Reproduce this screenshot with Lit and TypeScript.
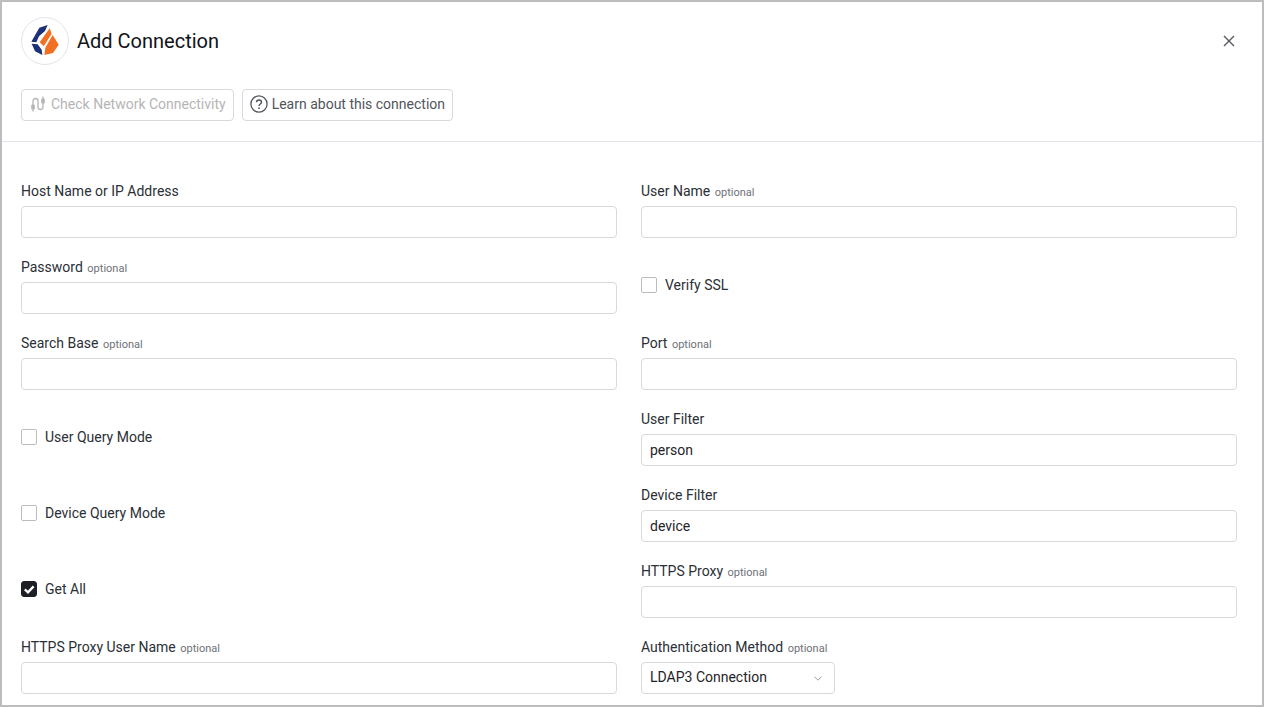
import { LitElement, html, css } from "lit";
import { customElement } from "lit/decorators.js";

type F =
  | { t: "input"; label: string; opt?: boolean; value?: string }
  | { t: "check"; label: string; checked?: boolean }
  | { t: "select"; label: string; opt?: boolean; value: string };

const fields: F[] = [
  { t: "input", label: "Host Name or IP Address" },
  { t: "input", label: "User Name", opt: true },
  { t: "input", label: "Password", opt: true },
  { t: "check", label: "Verify SSL" },
  { t: "input", label: "Search Base", opt: true },
  { t: "input", label: "Port", opt: true },
  { t: "check", label: "User Query Mode" },
  { t: "input", label: "User Filter", value: "person" },
  { t: "check", label: "Device Query Mode" },
  { t: "input", label: "Device Filter", value: "device" },
  { t: "check", label: "Get All", checked: true },
  { t: "input", label: "HTTPS Proxy", opt: true },
  { t: "input", label: "HTTPS Proxy User Name", opt: true },
  { t: "select", label: "Authentication Method", opt: true, value: "LDAP3 Connection" },
];

@customElement("app-root")
export class AppRoot extends LitElement {
  static styles = css`
    :host {
      display: block;
      width: 1264px;
      height: 707px;
      font-family: Roboto, "Liberation Sans", sans-serif;
      font-size: 14px;
      color: #2b2f36;
    }
    .frame {
      box-sizing: border-box;
      width: 1264px;
      height: 707px;
      border: 2px solid #bdbdbd;
      background: #fff;
      overflow: hidden;
    }
    .head {
      display: flex;
      align-items: center;
      padding: 15px 19px 0;
      height: 48px;
    }
    .logo {
      box-sizing: border-box;
      width: 48px;
      height: 48px;
      border: 1px solid #e3e4ec;
      border-radius: 50%;
      display: flex;
      flex: none;
    }
    .title {
      margin-left: 8px;
      font-size: 20px;
      line-height: 28px;
      color: #111318;
      flex: 1;
    }
    .close {
      display: flex;
      margin-right: 8px;
    }
    .actions {
      display: flex;
      gap: 8px;
      padding: 24px 19px 20px;
      border-bottom: 1px solid #e3e4ec;
    }
    .btn {
      box-sizing: border-box;
      height: 32px;
      display: flex;
      align-items: center;
      gap: 4px;
      padding: 0 7px 2px;
      border: 1px solid #d9d9d9;
      border-radius: 4px;
      background: #fff;
      color: #51555c;
      line-height: 18px;
      white-space: nowrap;
    }
    .btn.off {
      color: #b5b5b5;
      gap: 5px;
      padding-left: 8px;
    }
    .grid {
      display: grid;
      grid-template-columns: 596px 596px;
      column-gap: 24px;
      row-gap: 20px;
      padding: 40px 19px 0;
    }
    .label {
      height: 18px;
      line-height: 18px;
      margin-bottom: 6px;
      color: #2b2f36;
      white-space: nowrap;
    }
    .opt {
      font-size: 11px;
      color: #6d7178;
      margin-left: 1px;
    }
    .box {
      box-sizing: border-box;
      height: 32px;
      border: 1px solid #d9d9d9;
      border-radius: 4px;
      padding: 0 8px;
      display: flex;
      align-items: center;
      color: #1f2329;
      background: #fff;
    }
    .select {
      width: 194px;
      justify-content: space-between;
      padding-right: 12px;
      padding-bottom: 2px;
    }
    .select svg {
      margin-top: 2px;
    }
    .checkcell {
      display: flex;
      align-items: center;
      gap: 8px;
      height: 56px;
      padding-bottom: 2px;
      box-sizing: border-box;
      color: #2b2f36;
    }
    .cb {
      box-sizing: border-box;
      width: 16px;
      height: 16px;
      border: 1px solid #bcbcbc;
      border-radius: 2px;
      display: flex;
      align-items: center;
      justify-content: center;
      flex: none;
    }
    .cb.on {
      background: #1d1f24;
      border-color: #1d1f24;
      border-radius: 3px;
    }
  `;

  private field(f: F) {
    if (f.t === "check") {
      return html`<div class="checkcell">
        <span class="cb ${f.checked ? "on" : ""}">
          ${f.checked
            ? html`<svg width="12" height="12" viewBox="0 0 12 12"><path d="M1.8 6.4 5 9.4 10.6 3.4" fill="none" stroke="#fff" stroke-width="2.3"/></svg>`
            : ""}
        </span>
        <span>${f.label}</span>
      </div>`;
    }
    const label = html`<div class="label">${f.label}${f.opt ? html` <span class="opt">optional</span>` : ""}</div>`;
    if (f.t === "select") {
      return html`<div>
        ${label}
        <div class="box select">
          <span>${f.value}</span>
          <svg width="8" height="5" viewBox="0 0 8 5"><path d="M0.5 0.7 4 4.2 7.5 0.7" fill="none" stroke="#9a9da2" stroke-width="1"/></svg>
        </div>
      </div>`;
    }
    return html`<div>${label}<div class="box">${f.value ?? ""}</div></div>`;
  }

  render() {
    return html`<div class="frame">
      <div class="head">
        <div class="logo">
          <svg width="46" height="46" viewBox="21 21 138 138">
            <path fill="#1c3178" d="M73 50 98 42 90 60 72 76 64 94 49 92Z" />
            <path fill="#1c3178" d="M50 98 68 100 80 116 82 132 60 121Z" />
            <path fill="#f26f21" d="M104 52 110 68 86 106 74 94Z" />
            <path fill="#f26f21" d="M113 72 131 101 114 126 88 132 91 110Z" />
          </svg>
        </div>
        <div class="title">Add Connection</div>
        <div class="close">
          <svg width="12" height="12" viewBox="0 0 12 12"><path d="M1 1 11 11M11 1 1 11" stroke="#55585e" stroke-width="1.4" fill="none"/></svg>
        </div>
      </div>
      <div class="actions">
        <div class="btn off">
          <svg width="16" height="16" viewBox="0 0 16 16" fill="none" stroke="#b5b5b5" stroke-width="1.3">
            <path d="M3 9V5A2.5 2.5 0 0 1 8 5V11A2.5 2.5 0 0 0 13 11V6M3 13V15.5M13 3V0.5" />
            <rect x="1.2" y="8.5" width="3.6" height="5" rx="1" fill="#b5b5b5" stroke="none" />
            <rect x="11.2" y="2.5" width="3.6" height="5" rx="1" fill="#b5b5b5" stroke="none" />
          </svg>
          <span>Check Network Connectivity</span>
        </div>
        <div class="btn">
          <svg width="18" height="18" viewBox="0 0 18 18" fill="none" stroke="#51555c">
            <circle cx="9" cy="9" r="8.1" stroke-width="1.3" />
            <path d="M6.5 7.2C6.5 4.2 11.5 4.2 11.5 7.2 11.5 9 9 9 9 11" stroke-width="1.4" />
            <circle cx="9" cy="13.2" r="0.9" fill="#51555c" stroke="none" />
          </svg>
          <span>Learn about this connection</span>
        </div>
      </div>
      <div class="grid">${fields.map((f) => this.field(f))}</div>
    </div>`;
  }
}
